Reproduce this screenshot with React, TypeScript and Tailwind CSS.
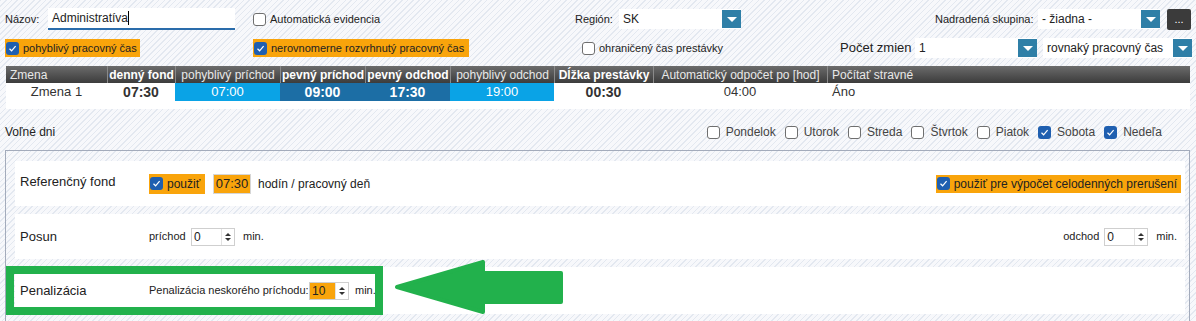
import React from "react";

const stripes =
  "bg-[image:repeating-linear-gradient(135deg,#e3e8f0_0px,#e3e8f0_1px,#f7f8fb_1px,#f7f8fb_4px)]";

const Check = ({ on = false }: { on?: boolean }) =>
  on ? (
    <span className="w-[13px] h-[13px] rounded-[3px] bg-[#1f5fb0] flex items-center justify-center flex-shrink-0">
      <svg width="9" height="9" viewBox="0 0 9 9">
        <path d="M1.5 4.8 L3.6 6.8 L7.6 2.2" fill="none" stroke="#ffffff" strokeWidth="1.2" />
      </svg>
    </span>
  ) : (
    <span className="w-[13px] h-[13px] rounded-[3px] bg-white border border-[#6f6f6f] flex-shrink-0" />
  );

const Select = ({ text, w }: { text: string; w: string }) => (
  <div className={`flex h-[20px] bg-white ${w}`}>
    <div className="flex-1 px-[4px] flex items-center text-[12px] text-[#222]">{text}</div>
    <div className="w-[19px] h-[18px] mt-[1px] bg-[#2f7fa7] flex items-center justify-center">
      <span className="w-0 h-0 border-x-[5px] border-x-transparent border-t-[5px] border-t-white" />
    </div>
  </div>
);

const Spin = ({ value, orange = false, w = "w-[44px]" }: { value: string; orange?: boolean; w?: string }) => (
  <div className={`flex h-[18px] ${w} bg-white border border-[#cfcfcf] flex-shrink-0`}>
    <div className={`flex-1 flex items-center pl-[2px] text-[12px] ${orange ? "bg-[#f9a40b]" : ""}`}>{value}</div>
    <div className="w-[13px] flex flex-col items-center justify-center gap-[2px] border-l border-[#e2e2e2]">
      <span className="w-0 h-0 border-x-[3px] border-x-transparent border-b-[3px] border-b-[#333]" />
      <span className="w-0 h-0 border-x-[3px] border-x-transparent border-t-[3px] border-t-[#333]" />
    </div>
  </div>
);

const cols = [
  { h: "Zmena", w: "w-[101px]", bold: false, left: true, v: "Zmena 1", cell: "justify-center font-normal", bg: "" },
  { h: "denný fond", w: "w-[68px]", bold: true, v: "07:30", cell: "justify-center font-bold text-[14px]", bg: "" },
  { h: "pohyblivý príchod", w: "w-[105px]", bold: false, v: "07:00", cell: "justify-center text-white", bg: "bg-[#0aa3e6]" },
  { h: "pevný príchod", w: "w-[85px]", bold: true, v: "09:00", cell: "justify-center font-bold text-[14px] text-white", bg: "bg-[#1c6ea5]" },
  { h: "pevný odchod", w: "w-[85px]", bold: true, v: "17:30", cell: "justify-center font-bold text-[14px] text-white", bg: "bg-[#1c6ea5]" },
  { h: "pohyblivý odchod", w: "w-[104px]", bold: false, v: "19:00", cell: "justify-center text-white", bg: "bg-[#0aa3e6]" },
  { h: "Dĺžka prestávky", w: "w-[99px]", bold: true, v: "00:30", cell: "justify-center font-bold text-[14px]", bg: "" },
  { h: "Automatický odpočet po [hod]", w: "w-[174px]", bold: false, v: "04:00", cell: "justify-center", bg: "" },
  { h: "Počítať stravné", w: "flex-1", bold: false, left: true, v: "Áno", cell: "justify-start pl-[5px]", bg: "" },
];

const days: [string, boolean][] = [
  ["Pondelok", false],
  ["Utorok", false],
  ["Streda", false],
  ["Štvrtok", false],
  ["Piatok", false],
  ["Sobota", true],
  ["Nedeľa", true],
];

export default function App() {
  return (
    <div
      className={`relative w-[1196px] h-[321px] overflow-hidden ${stripes} text-[#222] text-[11px]`}
      style={{ fontFamily: '"Liberation Sans", Arial, sans-serif' }}
    >
      {/* row 1 */}
      <div className="flex items-center h-[22px] mt-[8px]">
        <span className="ml-[5px] w-[43px] text-[11px]">Názov:</span>
        <div className="w-[187px] h-[22px] bg-white border-b-2 border-[#2a6cab] flex items-center pl-[4px] text-[12px]">
          Administratíva<span className="w-px h-[14px] bg-black" />
        </div>
        <div className="ml-[18px] w-[322px] flex items-center gap-[4px]">
          <Check />
          <span>Automatická evidencia</span>
        </div>
        <span className="w-[44px]">Región:</span>
        <Select text="SK" w="w-[122px]" />
        <span className="ml-[194px] w-[103px]">Nadradená skupina:</span>
        <Select text="- žiadna -" w="w-[122px]" />
        <div className="ml-[7px] w-[24px] h-[21px] rounded-[2px] bg-[#3b3b3b] text-white flex items-end justify-center pb-[5px] text-[11px] leading-none">
          ...
        </div>
      </div>

      {/* row 2 */}
      <div className="flex items-center h-[20px] mt-[8px]">
        <div className="ml-[5px] w-[135px] h-[18px] bg-[#f9a40b] flex items-center gap-[4px] pl-[1px]">
          <Check on />
          <span>pohyblivý pracovný čas</span>
        </div>
        <div className="ml-[113px] w-[216px] h-[18px] bg-[#f9a40b] flex items-center gap-[4px] pl-[1px]">
          <Check on />
          <span>nerovnomerne rozvrhnutý pracovný čas</span>
        </div>
        <div className="ml-[113px] w-[258px] flex items-center gap-[4px]">
          <Check />
          <span>ohraničený čas prestávky</span>
        </div>
        <span className="w-[75px] text-[13px]">Počet zmien</span>
        <Select text="1" w="w-[122px]" />
        <div className="ml-[6px]">
          <Select text="rovnaký pracovný čas" w="w-[149px]" />
        </div>
      </div>

      {/* shifts table */}
      <div className="ml-[6px] mt-[8px] w-[1184px] bg-white pb-[8px]">
        <div className="flex h-[17px] bg-gradient-to-b from-[#6c6c6c] to-[#3c3c3c] text-[12px]">
          {cols.map((c, i) => (
            <div
              key={c.h}
              className={`${c.w} flex items-center ${c.left ? "justify-start pl-[4px]" : "justify-center"} ${
                i > 0 ? "border-l border-[#8a8a8a]" : ""
              } ${c.bold ? "font-bold text-white text-[12px]" : "text-[#e8e8e8]"} whitespace-nowrap overflow-hidden`}
            >
              {c.h}
            </div>
          ))}
        </div>
        <div className="flex h-[18px] text-[13px] text-[#333]">
          {cols.map((c) => (
            <div key={c.h} className={`${c.w} ${c.bg} flex items-center ${c.cell}`}>
              {c.v}
            </div>
          ))}
        </div>
      </div>

      {/* free days */}
      <div className="flex items-center h-[20px] mt-[13px] text-[12px]">
        <span className="ml-[5px] text-[12px]">Voľné dni</span>
        <div className="ml-auto mr-[34px] flex items-center text-[#444]">
          {days.map(([d, on]) => (
            <div key={d} className="flex items-center gap-[6px] ml-[9px]">
              <Check on={on} />
              <span>{d}</span>
            </div>
          ))}
        </div>
      </div>

      {/* settings panel */}
      <div className="ml-[5px] mt-[8px] w-[1185px] border border-[#a3abbb] pt-[10px] pl-[9px] pr-[4px] pb-[10px] flex flex-col gap-[8px]">
        <div className="h-[45px] bg-white flex items-center pr-[4px]">
          <span className="w-[134px] pl-[5px] text-[13px] -mt-[3px]">Referenčný fond</span>
          <div className="w-[56px] h-[20px] bg-[#f9a40b] flex items-center gap-[4px] pl-[1px] text-[12px]">
            <Check on />
            <span>použiť</span>
          </div>
          <div className="ml-[8px] w-[38px] h-[20px] bg-[#f9a40b] border border-[#d6d6d6] flex items-center justify-center text-[13px]">
            07:30
          </div>
          <span className="ml-[7px] text-[12px]">hodín / pracovný deň</span>
          <div className="ml-auto h-[18px] bg-[#f9a40b] flex items-center gap-[4px] pl-[1px] pr-[4px] text-[12px]">
            <Check on />
            <span>použiť pre výpočet celodenných prerušení</span>
          </div>
        </div>

        <div className="h-[45px] bg-white flex items-center pr-[4px] text-[11px]">
          <span className="w-[134px] pl-[5px] text-[13px]">Posun</span>
          <span className="w-[42px]">príchod</span>
          <Spin value="0" />
          <span className="ml-[8px]">min.</span>
          <span className="ml-auto w-[41px]">odchod</span>
          <Spin value="0" />
          <span className="ml-[8px] mr-[4px]">min.</span>
        </div>

        <div className="h-[47px] bg-white flex items-center text-[11px]">
          <span className="w-[134px] pl-[5px] text-[13px] flex-shrink-0">Penalizácia</span>
          <span className="w-[160px] whitespace-nowrap flex-shrink-0">Penalizácia neskorého príchodu:</span>
          <Spin value="10" orange w="w-[40px]" />
          <span className="ml-[6px]">min.</span>
        </div>
      </div>

      {/* annotation */}
      <div className="absolute left-[6px] top-[266px] w-[377px] h-[49px] border-[8px] border-[#22b14c]" />
      <svg className="absolute left-[394px] top-[259px]" width="172" height="56" viewBox="0 0 172 56">
        <path
          d="M3 28 L89 3 L89 14 L167 14 L167 43 L89 43 L89 53 Z"
          fill="#22b14c"
          stroke="#22b14c"
          strokeWidth="4"
          strokeLinejoin="round"
        />
      </svg>
    </div>
  );
}
